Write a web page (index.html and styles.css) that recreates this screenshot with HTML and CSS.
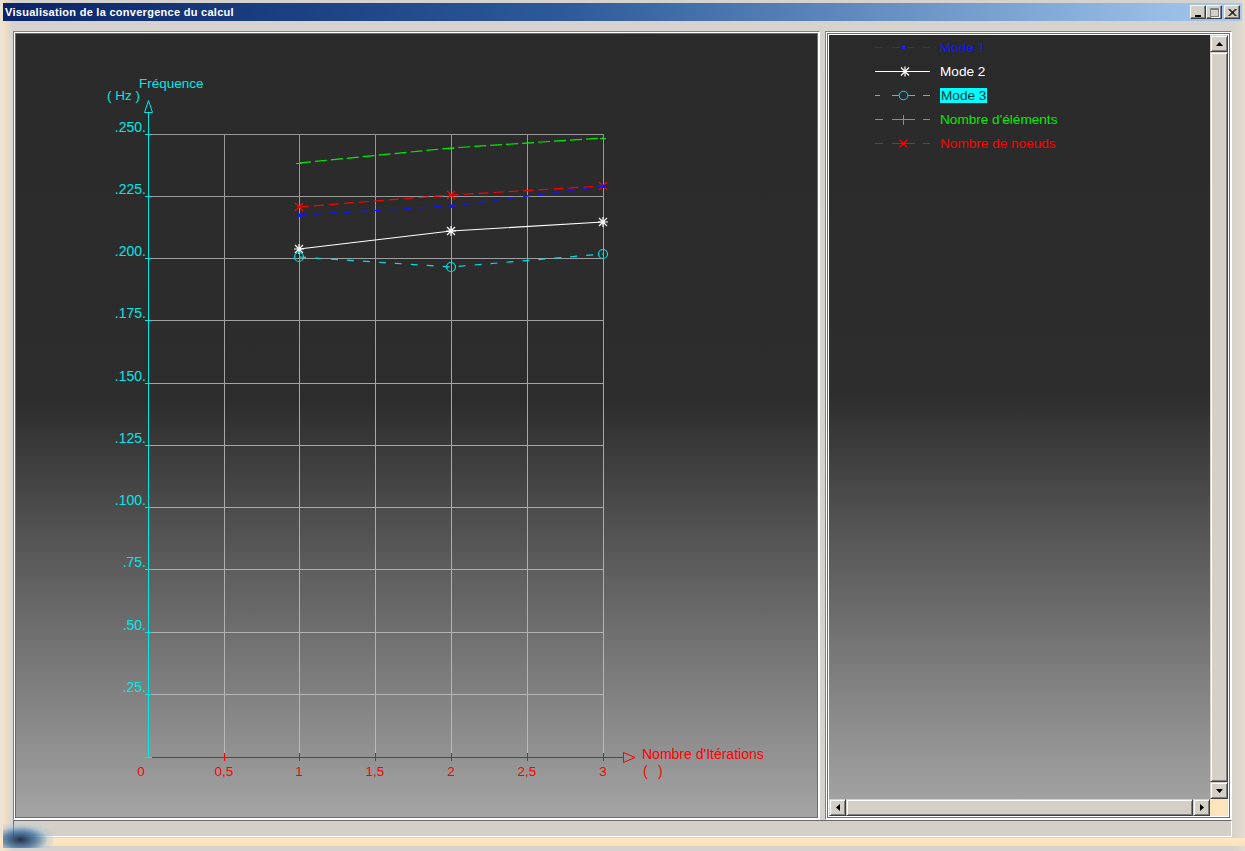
FILE: index.html
```html
<!DOCTYPE html>
<html lang="fr">
<head>
<meta charset="utf-8">
<title>Visualisation de la convergence du calcul</title>
<link rel="stylesheet" href="styles.css">
</head>
<body>
<div class="window">
  <div class="titlebar">
    <span class="title">Visualisation de la convergence du calcul</span>
    <div class="tb-btns">
      <span class="tb-btn"><svg width="14" height="13" viewBox="0 0 14 13"><rect x="4" y="9" width="6" height="2" fill="#000"/></svg></span>
      <span class="tb-btn"><svg width="14" height="13" viewBox="0 0 14 13"><path d="M3.5 2.5h8v8h-8z" fill="none" stroke="#808080"/><path d="M3 3.5h9" stroke="#808080"/><path d="M4.5 11.5h8v-8" fill="none" stroke="#fff"/></svg></span>
      <span class="tb-btn tb-close"><svg width="14" height="13" viewBox="0 0 14 13"><path d="M3.5 3l7 7M10.5 3l-7 7M4.5 3l7 7M11.5 3l-7 7" stroke="#000" stroke-width="1"/></svg></span>
    </div>
  </div>
  <div class="client">
    <div class="panes">
      <div class="pane pane-left">
        <div class="pane-body chart">
          <svg class="plot" width="801" height="783" viewBox="16 34 801 783">
            <defs>
              <linearGradient id="gridg" gradientUnits="userSpaceOnUse" x1="0" y1="134" x2="0" y2="757">
                <stop offset="0" stop-color="#979797"/>
                <stop offset="1" stop-color="#b9b9b9"/>
              </linearGradient>
            </defs>
            <g stroke="url(#gridg)" stroke-width="1" fill="none" shape-rendering="crispEdges">
              <path d="M224.5 134V757M299.5 134V757M375.5 134V757M451.5 134V757M527.5 134V757M603.5 134V757"/>
              <path d="M148 134.5H604M148 196.5H604M148 258.5H604M148 320.5H604M148 383.5H604M148 445.5H604M148 507.5H604M148 569.5H604M148 632.5H604M148 694.5H604"/>
            </g>
            <g stroke="#00e8e8" stroke-width="1" fill="none">
              <path d="M148.5 112V757.5" shape-rendering="crispEdges"/>
              <path d="M145 134.5H152M145 196.5H152M145 258.5H152M145 320.5H152M145 383.5H152M145 445.5H152M145 507.5H152M145 569.5H152M145 632.5H152M145 694.5H152M145 757.5H152" shape-rendering="crispEdges"/>
              <path d="M148.5 100.5L144.5 112.5H152.5Z"/>
            </g>
            <g fill="#00e8e8" font-family="Liberation Sans, Arial, sans-serif" font-size="14" text-anchor="end">
              <text x="146" y="132">.250.</text>
              <text x="146" y="194">.225.</text>
              <text x="146" y="256">.200.</text>
              <text x="146" y="318">.175.</text>
              <text x="146" y="381">.150.</text>
              <text x="146" y="443">.125.</text>
              <text x="146" y="505">.100.</text>
              <text x="146" y="567">.75.</text>
              <text x="146" y="630">.50.</text>
              <text x="146" y="692">.25.</text>
            </g>
            <g fill="#00e8e8" font-family="Liberation Sans, Arial, sans-serif" font-size="13.5">
              <text x="107" y="100">( Hz )</text>
              <text x="139" y="88">Fréquence</text>
            </g>
            <g stroke="#ff0000" stroke-width="1" fill="none">
              <path d="M152 757.5H623" shape-rendering="crispEdges"/>
              <path d="M224.5 753V761M299.5 753V761M375.5 753V761M451.5 753V761M527.5 753V761M603.5 753V761" shape-rendering="crispEdges"/>
              <path d="M623.5 752.5L635 757.5L623.5 762.5Z"/>
            </g>
            <g fill="#ff0000" font-family="Liberation Sans, Arial, sans-serif" font-size="13.5" text-anchor="middle">
              <text x="141" y="776">0</text>
              <text x="224" y="776">0,5</text>
              <text x="299" y="776">1</text>
              <text x="375" y="776">1,5</text>
              <text x="451" y="776">2</text>
              <text x="527" y="776">2,5</text>
              <text x="603" y="776">3</text>
            </g>
            <g fill="#ff0000" font-family="Liberation Sans, Arial, sans-serif" font-size="14">
              <text x="642" y="759">Nombre d'Itérations</text>
              <text x="643" y="776">(</text>
              <text x="658" y="776">)</text>
            </g>
            <!-- Nombre d'éléments -->
            <path d="M299 163L451 148L603 138" stroke="#00ee00" stroke-width="1.2" fill="none" stroke-dasharray="12 4"/>
            <path d="M296 163.5H302M299.5 160V167M448 148.5H454M451.5 145V152M600 138.5H606M603.5 135V142" stroke="#00ee00" stroke-width="1"/>
            <!-- Nombre de noeuds -->
            <path d="M299 207L451 195L603 186" stroke="#ff0000" stroke-width="1.2" fill="none" stroke-dasharray="10 5"/>
            <path d="M295 203L303 211M303 203L295 211M447 191L455 199M455 191L447 199M599 182L607 190M607 182L599 190" stroke="#ff0000" stroke-width="1.2"/>
            <!-- Mode 1 -->
            <path d="M299 215L451 206L603 186" stroke="#1414ff" stroke-width="1.3" fill="none" stroke-dasharray="8 7"/>
            <path d="M297.5 213.5h3.5v3.5h-3.5zM449.5 204.5h3.5v3.5h-3.5zM601.5 184.5h3.5v3.5h-3.5z" fill="#1414ff"/>
            <!-- Mode 2 -->
            <path d="M299 249L451 231L603 222" stroke="#ffffff" stroke-width="1.2" fill="none"/>
            <path d="M294 249H304M299 244V254M295 245L303 253M295 253L303 245M446 231H456M451 226V236M447 227L455 235M447 235L455 227M598 222H608M603 217V227M599 218L607 226M599 226L607 218" stroke="#ffffff" stroke-width="1.2"/>
            <!-- Mode 3 -->
            <path d="M299 257L451 267L603 254" stroke="#00e0e0" stroke-width="1.2" fill="none" stroke-dasharray="7 9"/>
            <g stroke="#00e0e0" stroke-width="1.2" fill="none">
              <circle cx="299" cy="257" r="4.5"/>
              <circle cx="451" cy="267" r="4.5"/>
              <circle cx="603" cy="254" r="4.5"/>
            </g>
          </svg>
        </div>
      </div>
      <div class="pane pane-right">
        <div class="pane-body list-frame">
          <div class="list-grid">
            <div class="legend">
              <div class="legend-row">
                <svg class="sym" width="55" height="14" viewBox="0 0 55 14"><path d="M0 7.5H8M17 7.5H25M32 7.5H40M48 7.5H55" stroke="#2020ff" shape-rendering="crispEdges"/><rect x="27" y="6" width="3" height="3" fill="#2020ff"/></svg>
                <span class="lbl lbl-blue">Mode 1</span>
              </div>
              <div class="legend-row">
                <svg class="sym" width="55" height="14" viewBox="0 0 55 14"><path d="M0 7.5H55" stroke="#fff" shape-rendering="crispEdges"/><path d="M25 7.5H35M30 2.5V12.5M26 3.5L34 11.5M26 11.5L34 3.5" stroke="#fff" stroke-width="1.2"/></svg>
                <span class="lbl lbl-white">Mode 2</span>
              </div>
              <div class="legend-row">
                <svg class="sym" width="55" height="14" viewBox="0 0 55 14"><path d="M0 7.5H5M17 7.5H24M33 7.5H40M48 7.5H55" stroke="#00e0e0" shape-rendering="crispEdges"/><circle cx="28.5" cy="7.5" r="4.3" fill="none" stroke="#00e0e0"/></svg>
                <span class="lbl lbl-sel">Mode 3</span>
              </div>
              <div class="legend-row">
                <svg class="sym" width="55" height="14" viewBox="0 0 55 14"><path d="M0 7.5H8M17 7.5H40M48 7.5H55M28.5 2.5V12.5" stroke="#00ee00" shape-rendering="crispEdges"/></svg>
                <span class="lbl lbl-green">Nombre d'éléments</span>
              </div>
              <div class="legend-row">
                <svg class="sym" width="55" height="14" viewBox="0 0 55 14"><path d="M0 7.5H8M17 7.5H40M48 7.5H55" stroke="#ff0000" shape-rendering="crispEdges"/><path d="M24.5 3.5L32.5 11.5M32.5 3.5L24.5 11.5" stroke="#ff0000" stroke-width="1.1"/></svg>
                <span class="lbl lbl-red">Nombre de noeuds</span>
              </div>
            </div>
            <div class="vscroll">
              <span class="sb-btn"><svg width="7" height="4" viewBox="0 0 7 4"><path d="M3.5 0L7 4H0Z" fill="#000"/></svg></span>
              <span class="sb-thumb"></span>
              <span class="sb-btn"><svg width="7" height="4" viewBox="0 0 7 4"><path d="M0 0H7L3.5 4Z" fill="#000"/></svg></span>
            </div>
            <div class="hscroll">
              <span class="sb-btn"><svg width="4" height="7" viewBox="0 0 4 7"><path d="M0 3.5L4 0V7Z" fill="#000"/></svg></span>
              <span class="sb-thumb"></span>
              <span class="sb-btn"><svg width="4" height="7" viewBox="0 0 4 7"><path d="M0 0L4 3.5L0 7Z" fill="#000"/></svg></span>
            </div>
            <div class="corner"></div>
          </div>
        </div>
      </div>
    </div>
    <div class="status"></div>
  </div>
  <div class="desk-strip"></div>
</div>
<div class="desk-blob"></div>
</body>
</html>
```

FILE: styles.css
```css
* { box-sizing: border-box; }
html, body { margin: 0; padding: 0; }
body {
  width: 1245px;
  height: 851px;
  overflow: hidden;
  background: #d6d3ce;
  font-family: "Liberation Sans", Arial, sans-serif;
  position: relative;
}
.window {
  display: flex;
  flex-direction: column;
  height: 851px;
  padding: 3px 3px 0 3px;
  background: linear-gradient(90deg, #e9e4de 0, #f6dfc0 4px, #ddd8d0 10px, #d6d3ce 13px, #d6d3ce 1232px, #dcd6cc 1238px, #e6ddd0 1245px);
}
.titlebar {
  height: 18px;
  flex: none;
  display: flex;
  align-items: center;
  justify-content: space-between;
  padding: 0 2px;
  background: linear-gradient(90deg, #0a246a 0%, #2c5a99 45%, #a6caf0 100%);
}
.title {
  color: #fff;
  font-weight: bold;
  font-size: 11px;
  line-height: 18px;
  letter-spacing: 0.28px;
}
.tb-btns {
  display: flex;
  align-items: center;
}
.tb-btn {
  width: 16px;
  height: 14px;
  background: #d4d0c8;
  border: 1px solid;
  border-color: #fff #404040 #404040 #fff;
  box-shadow: inset -1px -1px #808080;
  display: flex;
  align-items: center;
  justify-content: center;
}
.tb-btn svg { display: block; }
.tb-close { margin-left: 2px; }
.client {
  flex: none;
  display: flex;
  flex-direction: column;
  padding: 10px 10px 1px 10px;
}
.panes {
  display: flex;
  gap: 5px;
  height: 789px;
}
.pane {
  border: 1px solid;
  border-color: #808080 #fff #fff #808080;
  padding: 1px;
  background: #fff;
  height: 100%;
}
.pane-left { width: 807px; flex: none; }
.pane-right { flex: 1; }
.pane-body {
  border: 1px solid #6d6d6d;
  height: 100%;
}
.chart {
  background: linear-gradient(180deg, #2a2a2a 0%, #2d2d2d 47%, #a4a4a4 100%);
}
.plot { display: block; }
.list-frame {
  padding: 1px;
  background: #fff;
}
.list-grid {
  height: 100%;
  display: grid;
  grid-template-columns: 1fr 18px;
  grid-template-rows: 1fr 17px;
}
.legend {
  background: linear-gradient(180deg, #2a2a2a 0%, #2d2d2d 47%, #a2a2a2 100%);
  padding: 0 0 0 46px;
  display: flex;
  flex-direction: column;
}
.legend-row {
  height: 24px;
  display: flex;
  align-items: center;
  gap: 10px;
}
.sym { display: block; flex: none; }
.lbl {
  font-size: 13.6px;
  line-height: 15px;
  white-space: nowrap;
}
.lbl-blue { color: #1414ff; }
.lbl-white { color: #ffffff; }
.lbl-sel { color: #003a3a; background: #00ffff; padding: 0 1px; }
.lbl-green { color: #00ee00; }
.lbl-red { color: #ff0000; }
.vscroll {
  display: flex;
  flex-direction: column;
  background: #d4d0c8;
}
.hscroll {
  display: flex;
  flex-direction: row;
  background: #d4d0c8;
}
.sb-btn {
  flex: none;
  width: 18px;
  height: 17px;
  background: #d4d0c8;
  border: 1px solid;
  border-color: #d4d0c8 #404040 #404040 #d4d0c8;
  box-shadow: inset 1px 1px #fff, inset -1px -1px #808080;
  display: flex;
  align-items: center;
  justify-content: center;
}
.hscroll .sb-btn { width: 17px; }
.sb-btn svg { display: block; }
.sb-thumb {
  flex: 1;
  background: #d4d0c8;
  border: 1px solid;
  border-color: #d4d0c8 #404040 #404040 #d4d0c8;
  box-shadow: inset 1px 1px #fff, inset -1px -1px #808080;
}
.corner { background: #fce4bd; }
.status {
  height: 17px;
  border: 1px solid;
  border-color: #6d6d6d #fff #fff #6d6d6d;
  background: #d4d0c8;
}
.desk-strip {
  height: 8px;
  margin: 0 -3px;
  background: linear-gradient(180deg, #fde7c4, #fde2b8);
}
.desk-blob {
  position: absolute;
  left: 3px;
  top: 824px;
  width: 50px;
  height: 24px;
  background: radial-gradient(ellipse at 35% 65%, rgba(20,40,70,0.95) 0%, rgba(60,110,160,0.8) 35%, rgba(150,190,220,0.4) 60%, rgba(253,228,190,0) 80%);
}
```
